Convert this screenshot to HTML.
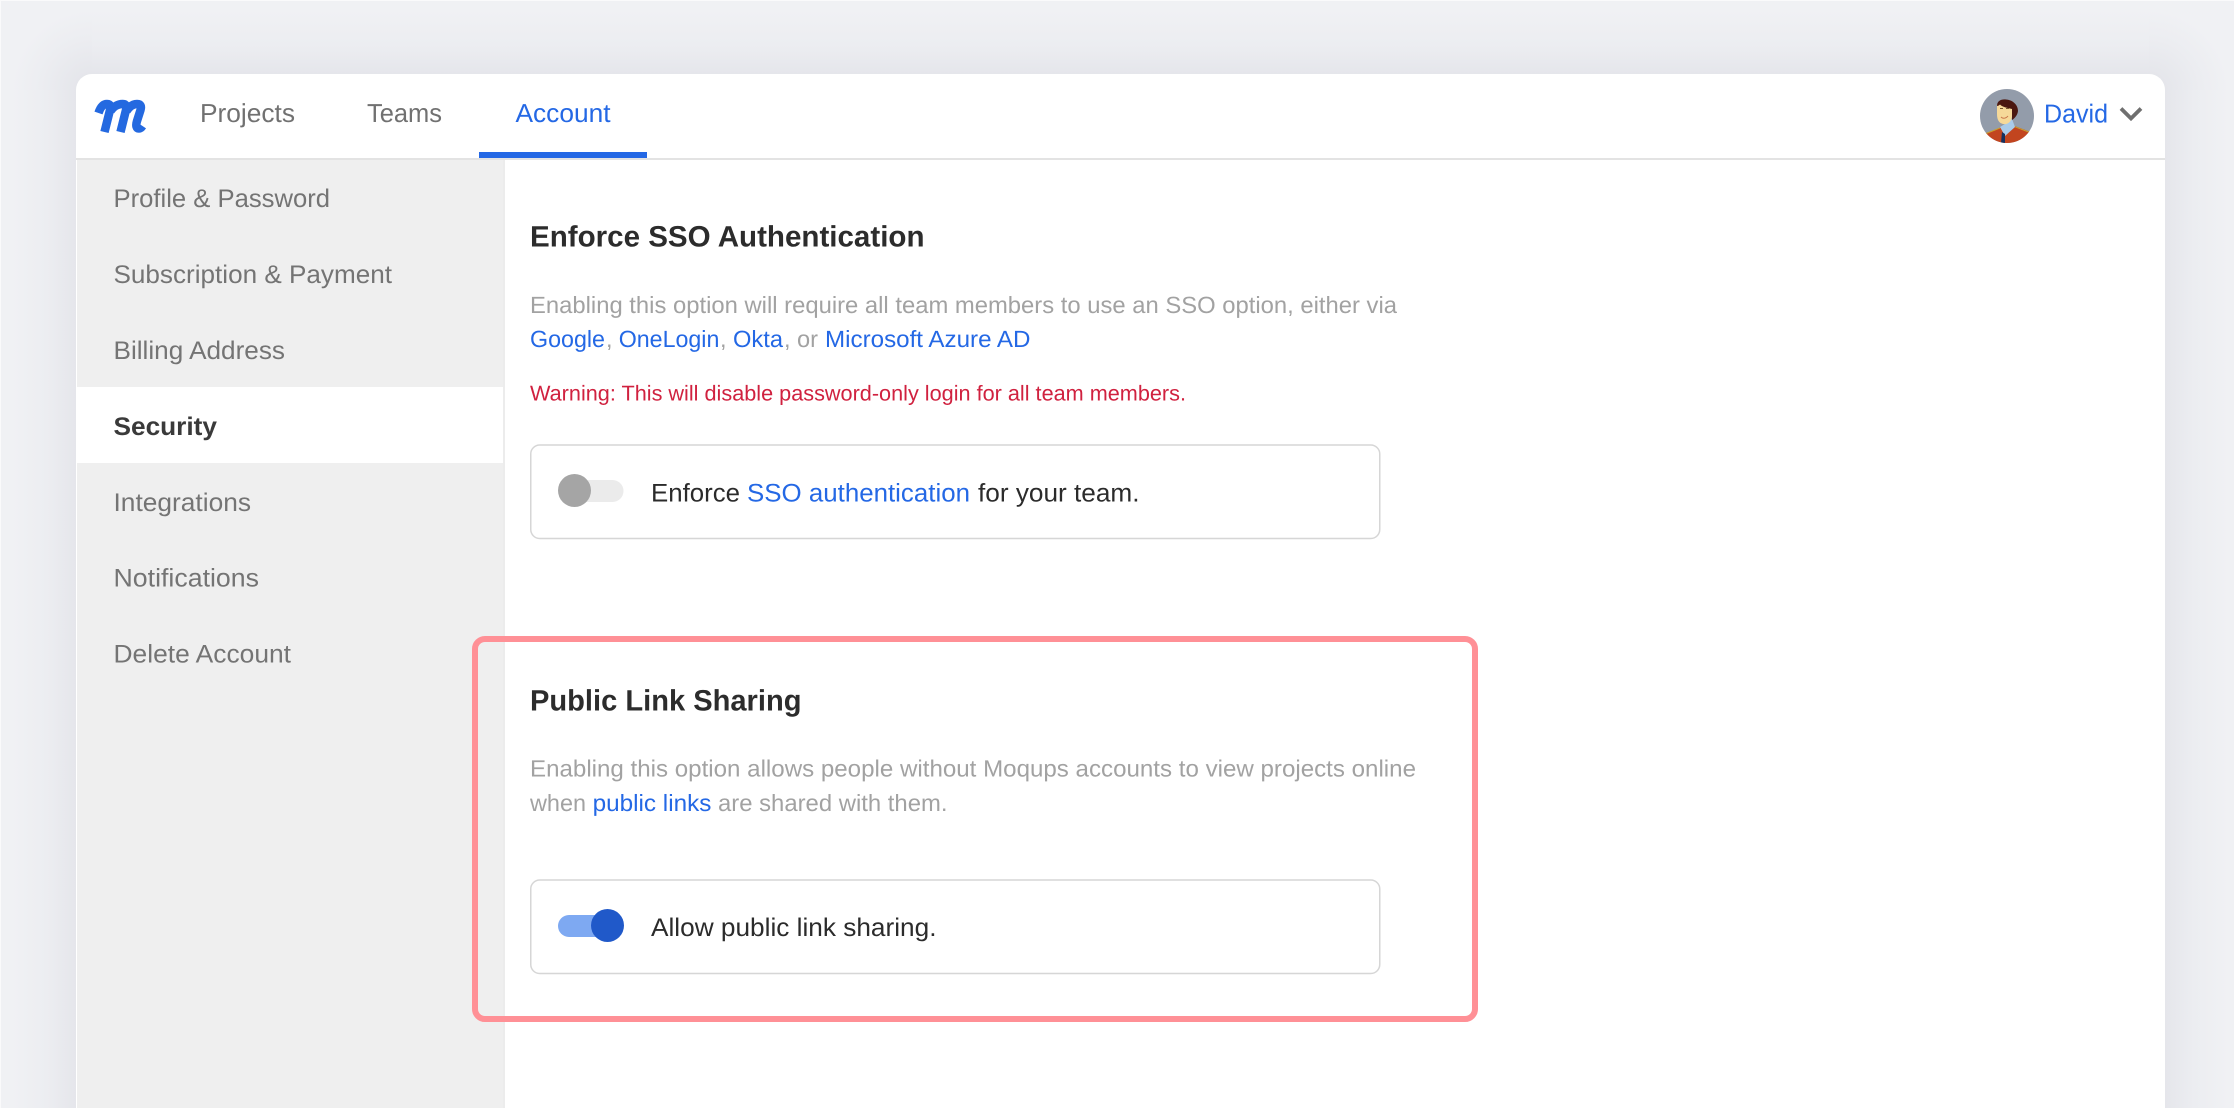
<!DOCTYPE html>
<html lang="en"><head><meta charset="utf-8"><title>Security</title>
<style>
html,body{margin:0;padding:0;width:2234px;height:1108px;overflow:hidden;background:#f0f1f4}
svg{display:block}
text{font-family:"Liberation Sans",Arial,sans-serif;text-rendering:geometricPrecision}
.n{font-size:26px;fill:#717171}
.s{font-size:25.5px;fill:#747474}
.h{font-size:29.5px;font-weight:700;fill:#2c2c2c}
.d{font-size:23.5px;fill:#a2a2a2}
.l{font-size:23.5px;fill:#2468e5}
.b{font-size:25.5px;fill:#2b2b2b}
.bl{font-size:25.5px;fill:#2468e5}
</style></head><body>
<svg width="2234" height="1108" viewBox="0 0 2234 1108" xmlns="http://www.w3.org/2000/svg">
<defs>
<clipPath id="av"><circle cx="2007" cy="116" r="27"/></clipPath>
<linearGradient id="gl" x1="0" x2="1" y1="0" y2="0"><stop offset="0" stop-color="#f0f1f4"/><stop offset=".55" stop-color="#ecedf1"/><stop offset="1" stop-color="#e5e6eb"/></linearGradient>
<linearGradient id="gr" x1="1" x2="0" y1="0" y2="0"><stop offset="0" stop-color="#f0f1f4"/><stop offset=".55" stop-color="#ecedf1"/><stop offset="1" stop-color="#e5e6eb"/></linearGradient>
<linearGradient id="gt" x1="0" x2="0" y1="0" y2="1"><stop offset="0" stop-color="#f0f1f4"/><stop offset=".55" stop-color="#ecedf1"/><stop offset="1" stop-color="#e5e6eb"/></linearGradient>
<radialGradient id="gc" cx="1" cy="1" r="1"><stop offset="0" stop-color="#e5e6eb"/><stop offset=".2" stop-color="#e5e6eb"/><stop offset=".64" stop-color="#ecedf1"/><stop offset="1" stop-color="#f0f1f4"/></radialGradient>
<radialGradient id="gd" cx="0" cy="1" r="1"><stop offset="0" stop-color="#e5e6eb"/><stop offset=".2" stop-color="#e5e6eb"/><stop offset=".64" stop-color="#ecedf1"/><stop offset="1" stop-color="#f0f1f4"/></radialGradient>
</defs>
<rect width="2234" height="1108" fill="#f0f1f4"/>
<rect x="92" y="10" width="2057" height="64" fill="url(#gt)"/>
<rect x="12" y="90" width="64" height="1018" fill="url(#gl)"/>
<rect x="2165" y="90" width="64" height="1018" fill="url(#gr)"/>
<rect x="12" y="10" width="80" height="80" fill="url(#gc)"/>
<rect x="2149" y="10" width="80" height="80" fill="url(#gd)"/>
<rect x="0" y="0" width="2234" height="1" fill="#fafafb"/>
<rect x="0" y="0" width="1" height="1108" fill="#fafafb"/>
<path fill="#fff" d="M76 1108V90A16 16 0 0 1 92 74H2149A16 16 0 0 1 2165 90V1108Z"/>
<rect x="77" y="160" width="426" height="948" fill="#efefef"/>
<rect x="503" y="160" width="2" height="948" fill="#ececec"/>
<rect x="76" y="158" width="2089" height="2" fill="#e3e3e3"/>
<rect x="479" y="152" width="168" height="6" fill="#2468e5"/>
<rect x="77" y="387" width="426" height="76" fill="#fff"/>

<g fill="none" stroke="#2469e0" stroke-width="8.500">
<path d="M98.500 113C100.500 107 103.500 104 107 104C110.500 104 111 106.500 110 110L104.500 132"/>
<path d="M110.500 111C113.500 106.500 118 104 122.500 104C126.500 104 127 106.500 126 110L120.500 132"/>
<path d="M126.500 111C129.500 106.500 133 104 137 104C141 104 141.500 106.500 140.500 110L137 121C135.500 126 136.500 128.500 139 128.500C140.500 128.500 141.500 127.500 142.500 126"/>
</g>

<text class="n" x="200" y="122" textLength="95" lengthAdjust="spacingAndGlyphs">Projects</text>
<text class="n" x="367" y="122" textLength="75" lengthAdjust="spacingAndGlyphs">Teams</text>
<text class="n" x="515.500" y="122" textLength="95" lengthAdjust="spacingAndGlyphs" style="fill:#2468e5">Account</text>

<g clip-path="url(#av)">
<rect x="1980" y="89" width="54" height="54" fill="#939caa"/>
<path fill="#c2451f" d="M1980 137L1986 133L2001 127.500L2012 125L2028 131L2034 134V143H1980Z"/>
<path fill="none" stroke="#c9a02e" stroke-width="1" d="M1985 134L2000 128M2013 126L2030 132.500"/>
<path fill="#a9cbea" d="M2000 127L2005 124L2012 119L2015 127L2005 136Z"/>
<path fill="#16305e" d="M2002 132L2005 134L2005 143H2001Z"/>
<path fill="#f6d999" d="M1997 104H2012V116C2012 121 2008 125 2003 124C1999 123 1997 120 1997 114Z"/>
<path fill="#4a1710" d="M1997 106C1997 101 2001 99 2006 99.500C2013 100 2018 105 2018 111C2017.500 115 2015 118 2012 120L2012 109C2008 108 2002 107 2000 104.500C1999 105.500 1998 106 1997 106Z"/>
<path fill="none" stroke="#c9774a" stroke-width="1" d="M2001 117C2003 119 2006 118.500 2008 116"/>
<path fill="none" stroke="#7a5a30" stroke-width="1" d="M2000 108.500H2003M2006 108.500H2009"/>
</g>
<text x="2044" y="122.500" textLength="64" lengthAdjust="spacingAndGlyphs" style="font-size:26px;fill:#2468e5">David</text>
<path d="M2121 108.500L2131 118.500L2141 108.500" fill="none" stroke="#6f6f6f" stroke-width="3.800"/>

<text class="s" x="113.500" y="207" textLength="216.500" lengthAdjust="spacingAndGlyphs">Profile &amp; Password</text>
<text class="s" x="113.500" y="283" textLength="278.500" lengthAdjust="spacingAndGlyphs">Subscription &amp; Payment</text>
<text class="s" x="113.500" y="359" textLength="171.500" lengthAdjust="spacingAndGlyphs">Billing Address</text>
<text class="s" x="113.500" y="435" textLength="103.500" lengthAdjust="spacingAndGlyphs" style="font-weight:700;fill:#3a3a3a">Security</text>
<text class="s" x="113.500" y="511" textLength="137.500" lengthAdjust="spacingAndGlyphs">Integrations</text>
<text class="s" x="113.500" y="586.500" textLength="145.500" lengthAdjust="spacingAndGlyphs">Notifications</text>
<text class="s" x="113.500" y="662.500" textLength="177.500" lengthAdjust="spacingAndGlyphs">Delete Account</text>

<text class="h" x="530" y="246.500" textLength="394.500" lengthAdjust="spacingAndGlyphs">Enforce SSO Authentication</text>
<text class="d" x="530" y="313" textLength="867" lengthAdjust="spacingAndGlyphs">Enabling this option will require all team members to use an SSO option, either via</text>
<text class="l" x="530" y="347" textLength="75" lengthAdjust="spacingAndGlyphs">Google</text>
<text class="d" x="606" y="347">,</text>
<text class="l" x="618.700" y="347" textLength="100.700" lengthAdjust="spacingAndGlyphs">OneLogin</text>
<text class="d" x="720" y="347">,</text>
<text class="l" x="733" y="347" textLength="50" lengthAdjust="spacingAndGlyphs">Okta</text>
<text class="d" x="784" y="347">,</text>
<text class="d" x="797" y="347" textLength="21" lengthAdjust="spacingAndGlyphs">or</text>
<text class="l" x="825" y="347" textLength="205.500" lengthAdjust="spacingAndGlyphs">Microsoft Azure AD</text>
<text x="530" y="400.500" textLength="656" lengthAdjust="spacingAndGlyphs" style="font-size:21.500px;fill:#d0213f">Warning: This will disable password-only login for all team members.</text>

<rect x="530.750" y="445" width="849" height="93.500" rx="9" fill="#fff" stroke="#d6d6d6" stroke-width="1.500"/>
<rect x="560" y="480" width="63.500" height="22" rx="11" fill="#ebebeb"/>
<circle cx="574.500" cy="490.500" r="16.500" fill="#a5a5a5"/>
<text class="b" x="651" y="501.500" textLength="89" lengthAdjust="spacingAndGlyphs">Enforce</text>
<text class="bl" x="747" y="501.500" textLength="223" lengthAdjust="spacingAndGlyphs">SSO authentication</text>
<text class="b" x="978" y="501.500" textLength="161.500" lengthAdjust="spacingAndGlyphs">for your team.</text>

<text class="h" x="530" y="710.500" textLength="271.500" lengthAdjust="spacingAndGlyphs">Public Link Sharing</text>
<text class="d" x="530" y="776.500" textLength="886" lengthAdjust="spacingAndGlyphs">Enabling this option allows people without Moqups accounts to view projects online</text>
<text class="d" x="530" y="811" textLength="56" lengthAdjust="spacingAndGlyphs">when</text>
<text class="l" x="592.600" y="811" textLength="118.800" lengthAdjust="spacingAndGlyphs">public links</text>
<text class="d" x="718" y="811" textLength="229.500" lengthAdjust="spacingAndGlyphs">are shared with them.</text>

<rect x="530.750" y="880" width="849" height="93.500" rx="9" fill="#fff" stroke="#d6d6d6" stroke-width="1.500"/>
<rect x="558" y="915" width="64" height="22" rx="11" fill="#7ea9f2"/>
<circle cx="607.500" cy="925.500" r="16.500" fill="#2059c9"/>
<text class="b" x="651" y="936" textLength="285.500" lengthAdjust="spacingAndGlyphs">Allow public link sharing.</text>

<rect x="475" y="639" width="1000" height="380" rx="10" fill="none" stroke="#ff9096" stroke-width="6"/>
</svg>
</body></html>
